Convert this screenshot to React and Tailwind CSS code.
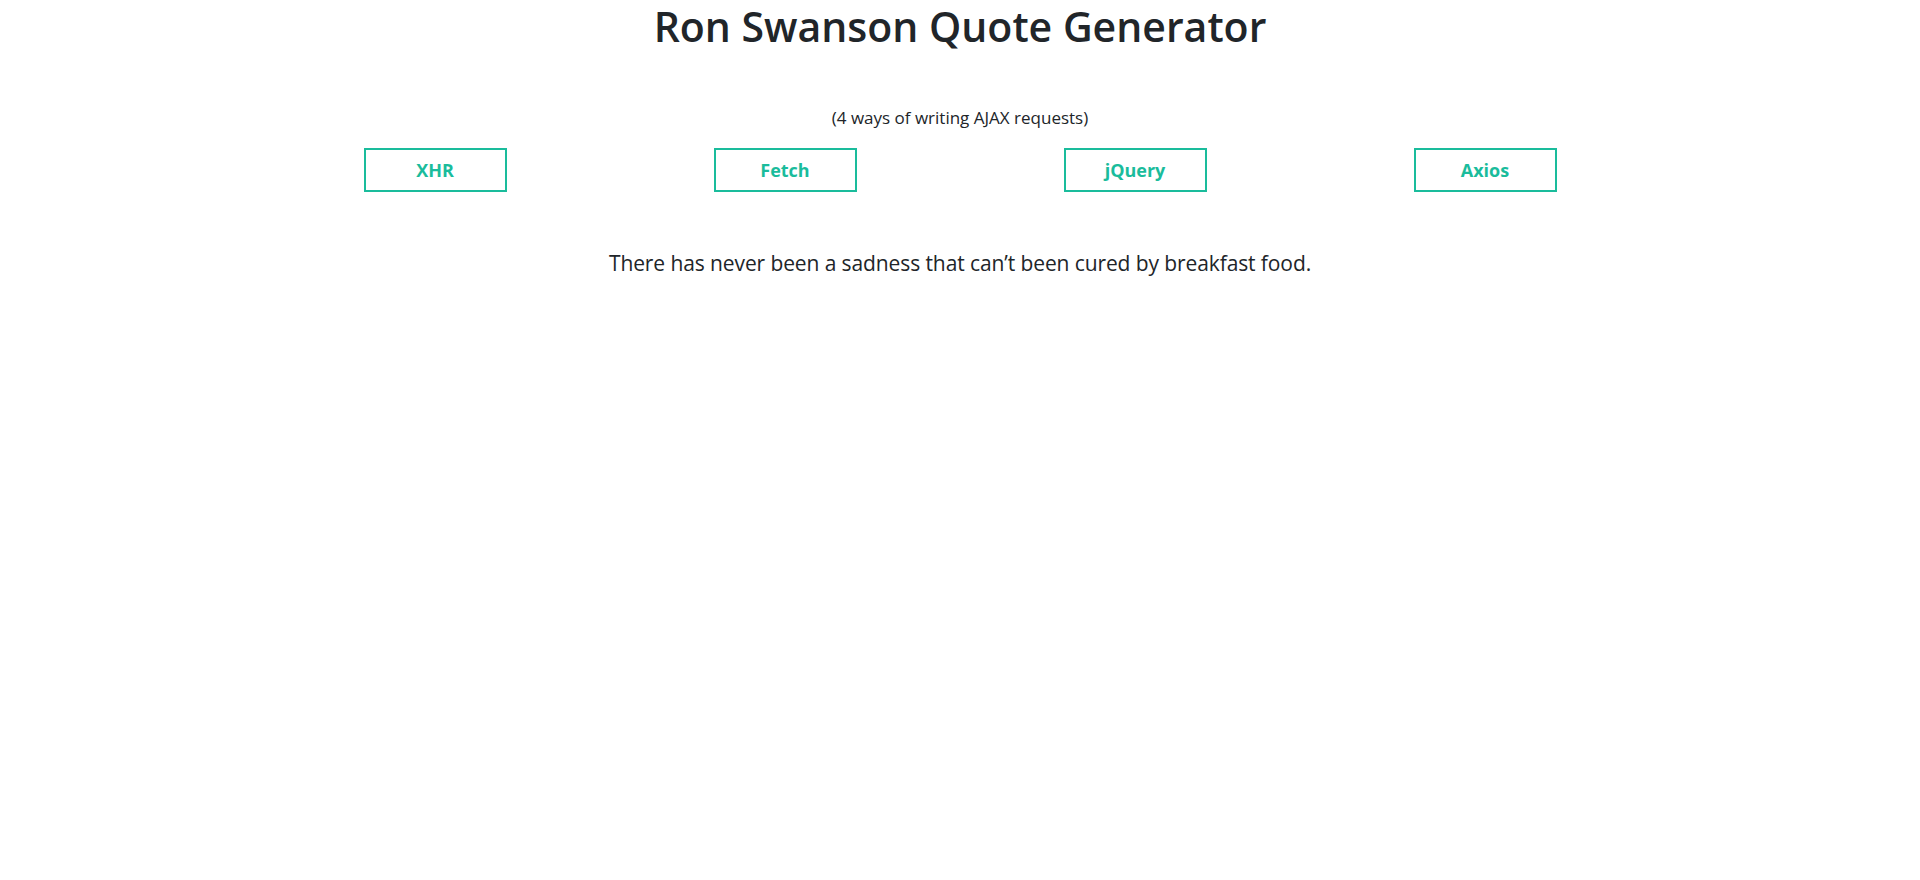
const methods = ['XHR', 'Fetch', 'jQuery', 'Axios'];

export default function App() {
  return (
    <div className="min-h-screen bg-white text-[#212529] font-['Open_Sans',sans-serif]">
      <h1 className="pt-[2px] text-center text-[41px] leading-[1.2] font-semibold">Ron Swanson Quote Generator</h1>

      <p className="mt-[55px] text-center text-[17px] leading-[24px]">(4 ways of writing AJAX requests)</p>

      <div className="mx-auto mt-[18px] grid w-[1400px] grid-cols-4">
        {methods.map((m) => (
          <div key={m} className="flex justify-center">
            <button className="h-[44px] w-[143px] border-2 border-[#1abc9c] text-[18px] font-bold text-[#1abc9c]">
              {m}
            </button>
          </div>
        ))}
      </div>

      <p className="mt-[55px] text-center text-[21px] leading-[32px] tracking-[-0.1px]">
        There has never been a sadness that can’t been cured by breakfast food.
      </p>
    </div>
  );
}
